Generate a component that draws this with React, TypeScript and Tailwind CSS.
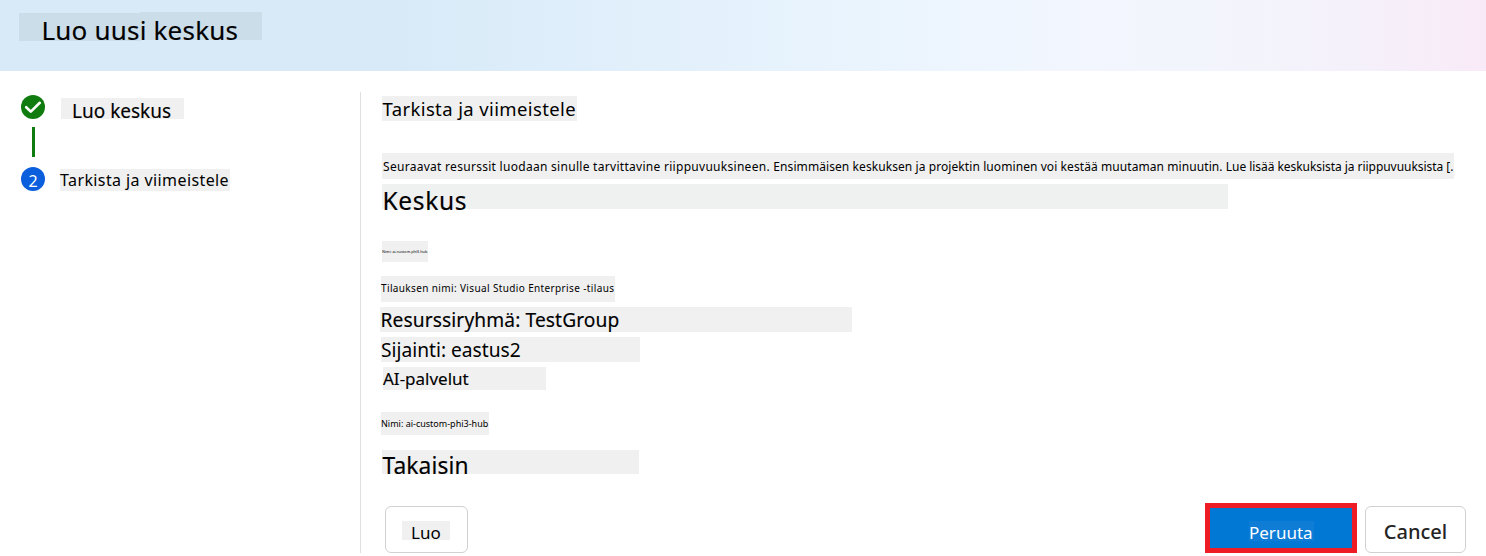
import type { ReactNode } from 'react';

function Chip({ box, text, children }: { box: string; text: string; children: ReactNode }) {
  return (
    <div className={`shrink-0 whitespace-nowrap text-black ${box}`}>
      <span className={`block ${text}`}>{children}</span>
    </div>
  );
}

function Stepper() {
  return (
    <aside className="flex w-[360px] shrink-0 flex-col pt-6 pl-[21px]">
      <div className="flex h-6">
        <svg className="size-6 shrink-0" viewBox="0 0 24 24" fill="none">
          <circle cx="12" cy="12" r="12" fill="#107c10" />
          <path d="M5.2 12.2 L9.8 16.6 L18.8 7.8" stroke="#fff" strokeWidth="2.6" strokeLinecap="round" strokeLinejoin="round" />
        </svg>
        <Chip box="mt-[3px] ml-4 h-[21px] w-[123px] bg-[#f0f0f0] pl-[11px]" text="text-[19px] leading-[27px] [-webkit-text-stroke:0.15px_black]">
          Luo keskus
        </Chip>
      </div>
      <div className="mt-2 ml-[11px] h-[30px] w-[3px] bg-[#107c10]" />
      <div className="mt-[10px] flex h-6">
        <div className="size-6 shrink-0 rounded-full bg-[#0b5fdc] text-center text-[16px] leading-[29px] text-white">2</div>
        <Chip box="mt-[2px] ml-[15px] h-[22px] w-[170px] bg-[#f0f0f0]" text="text-[16px] leading-[22px] tracking-[0.4px]">
          Tarkista ja viimeistele
        </Chip>
      </div>
    </aside>
  );
}

export default function App() {
  return (
    <div className="flex h-[556px] w-[1486px] flex-col overflow-hidden bg-white font-['Noto_Sans',sans-serif]">
      <header className="flex h-[71px] shrink-0 bg-[linear-gradient(90deg,#d8eaf8_0%,#d8eaf8_27%,#e2f0fb_45%,#ecf5fe_62%,#f2f6fe_72%,#f3f4fb_84%,#f5f0fa_92%,#f9eaf8_100%)] pt-3 pl-[19px]">
        <Chip
          box="h-[29px] w-[243px] bg-[linear-gradient(#cbdde9,#cbdde9),linear-gradient(#cbdde9,#cbdde9)] bg-[size:122px_28px,122px_28px] bg-[position:0_1px,121px_0] bg-no-repeat pl-[22.5px]"
          text="text-[26px] leading-[36px] tracking-[0.2px] [-webkit-text-stroke:0.15px_black]"
        >
          Luo uusi keskus
        </Chip>
      </header>
      <div className="flex flex-1">
        <Stepper />
        <main className="mt-[21px] flex h-[461px] flex-1 flex-col items-start border-l border-[#e0e0e0] pl-[19px]">
          <Chip box="mt-1 ml-[2px] h-[25px] w-[195px] bg-[#f0f0f0]" text="pl-[0.5px] text-[18.5px] leading-[26px] tracking-[0.38px]">
            Tarkista ja viimeistele
          </Chip>
          <Chip box="mt-8 ml-[2px] h-[26px] w-[1072px] bg-[#f0f0f0]" text="pl-px text-[12px] leading-[27px]">
            <span className="tracking-[0.287px]">Seuraavat resurssit luodaan sinulle tarvittavine riippuvuuksineen. </span>
            <span className="tracking-[0.08px]">Ensimmäisen keskuksen ja projektin luominen voi kestää muutaman minuutin. </span>
            <span className="tracking-[-0.05px]">Lue lisää keskuksista ja riippuvuuksista [.</span>
          </Chip>
          <Chip box="mt-[5px] ml-[2px] h-[25px] w-[846px] bg-[#eff1f0]" text="pl-[0.5px] text-[24.5px] leading-[33px] tracking-[0.65px] [-webkit-text-stroke:0.15px_black]">
            Keskus
          </Chip>
          <Chip box="mt-8 ml-[2px] h-[21px] w-[46px] bg-[#f0f0f0]" text="text-[3.8px] leading-[21px]">
            Nimi: ai-custom-phi3-hub
          </Chip>
          <Chip box="mt-[14px] ml-[1px] h-[26px] w-[234px] bg-[#f0f0f0]" text="text-[10px] leading-[25px] tracking-[0.37px]">
            Tilauksen nimi: Visual Studio Enterprise -tilaus
          </Chip>
          <Chip box="mt-[5px] h-[25px] w-[472px] bg-[#f0f0f0]" text="pl-[0.5px] text-[19.2px] leading-[26px] tracking-[0.1px] [-webkit-text-stroke:0.15px_black]">
            Resurssiryhmä: TestGroup
          </Chip>
          <Chip box="mt-[5px] ml-[1px] h-[25px] w-[259px] bg-[#f0f0f0]" text="text-[19.2px] leading-[26px]">
            Sijainti: eastus2
          </Chip>
          <Chip box="mt-[5px] ml-[3px] h-[23px] w-[163px] bg-[#f0f0f0]" text="text-[17px] leading-[24px] [-webkit-text-stroke:0.15px_black]">
            AI-palvelut
          </Chip>
          <Chip box="mt-[22px] ml-[1px] h-[23px] w-[108px] bg-[#f0f0f0]" text="text-[9px] leading-[23px]">
            Nimi: ai-custom-phi3-hub
          </Chip>
          <Chip box="mt-[15px] ml-[2px] h-6 w-[257px] bg-[#f0f0f0]" text="pl-[0.5px] text-[22.8px] leading-[31px] tracking-[0.1px] [-webkit-text-stroke:0.15px_black]">
            Takaisin
          </Chip>
          <footer className="mt-[29px] flex h-[50px] w-[1086px] shrink-0 items-start pl-[5px]">
            <button className="mt-[3px] flex h-[47px] w-[83px] items-start rounded-[6px] border border-[#d1d1d1] bg-white pt-[14px] pl-4">
              <Chip box="h-[19px] w-[48px] bg-[#f0f0f0] pl-[9px] text-left" text="text-[17px] leading-[23px]">
                Luo
              </Chip>
            </button>
            <button className="ml-auto flex h-[50px] w-[152px] items-start border-[5px] border-[#ee1c25] bg-[#0078d4] pt-[13px] pl-[39px]">
              <Chip box="h-5 w-[65px] bg-[#0f7dd6] text-left" text="text-[17px] leading-[24px] text-white">
                Peruuta
              </Chip>
            </button>
            <button className="mt-[3px] ml-2 h-[47px] w-[101px] rounded-[6px] border border-[#d1d1d1] bg-white text-[20px] leading-[50px] font-medium text-[#242424]">
              Cancel
            </button>
          </footer>
        </main>
      </div>
    </div>
  );
}
